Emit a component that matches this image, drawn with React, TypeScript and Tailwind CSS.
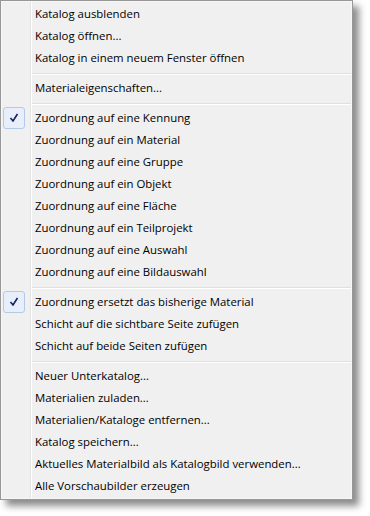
import { Fragment } from "react";

type Item = { label: string; checked?: boolean };

const groups: Item[][] = [
  [
    { label: "Katalog ausblenden" },
    { label: "Katalog öffnen..." },
    { label: "Katalog in einem neuem Fenster öffnen" },
  ],
  [{ label: "Materialeigenschaften..." }],
  [
    { label: "Zuordnung auf eine Kennung", checked: true },
    { label: "Zuordnung auf ein Material" },
    { label: "Zuordnung auf eine Gruppe" },
    { label: "Zuordnung auf ein Objekt" },
    { label: "Zuordnung auf eine Fläche" },
    { label: "Zuordnung auf ein Teilprojekt" },
    { label: "Zuordnung auf eine Auswahl" },
    { label: "Zuordnung auf eine Bildauswahl" },
  ],
  [
    { label: "Zuordnung ersetzt das bisherige Material", checked: true },
    { label: "Schicht auf die sichtbare Seite zufügen" },
    { label: "Schicht auf beide Seiten zufügen" },
  ],
  [
    { label: "Neuer Unterkatalog..." },
    { label: "Materialien zuladen..." },
    { label: "Materialien/Kataloge entfernen..." },
    { label: "Katalog speichern..." },
    { label: "Aktuelles Materialbild als Katalogbild verwenden..." },
    { label: "Alle Vorschaubilder erzeugen" },
  ],
];

const CheckMark = () => (
  <div className="w-[22px] h-[22px] rounded-[3px] border border-[#b2c9e8] bg-[#e8effa] flex items-center justify-center">
    <svg width="10" height="10" viewBox="0 0 10 10">
      <path d="M1.5 5 L4 8 L8.5 1" fill="none" stroke="#12215e" strokeWidth="1.6" />
    </svg>
  </div>
);

const MenuRow = ({ item }: { item: Item }) => (
  <div className="flex h-[22px] items-center">
    <div className="w-[27px] pl-[1px] flex items-center">{item.checked && <CheckMark />}</div>
    <span className="pl-[6px] text-[11.4px] text-black whitespace-nowrap">{item.label}</span>
  </div>
);

const Separator = () => (
  <div className="h-[8px] pl-[30px] pt-[4px]">
    <div className="border-t border-b border-t-[#e0e0e0] border-b-white" />
  </div>
);

export default function App() {
  return (
    <div
      className="w-[370px] h-[516px] bg-white"
      style={{ fontFamily: '"Open Sans", "Noto Sans", sans-serif' }}
    >
      <div className="w-[353px] border border-[#979797] shadow-[6px_6px_7px_rgba(0,0,0,0.45)]">
        <div className="border border-[#f7f7f7] py-[1px] bg-[#f0f0f0] bg-[linear-gradient(to_right,transparent_28px,#e2e3e3_28px,#e2e3e3_29px,#ffffff_29px,#ffffff_30px,transparent_30px)]">
          {groups.map((g, gi) => (
            <Fragment key={gi}>
              {gi > 0 && <Separator />}
              {g.map((it) => (
                <MenuRow key={it.label} item={it} />
              ))}
            </Fragment>
          ))}
        </div>
      </div>
    </div>
  );
}
